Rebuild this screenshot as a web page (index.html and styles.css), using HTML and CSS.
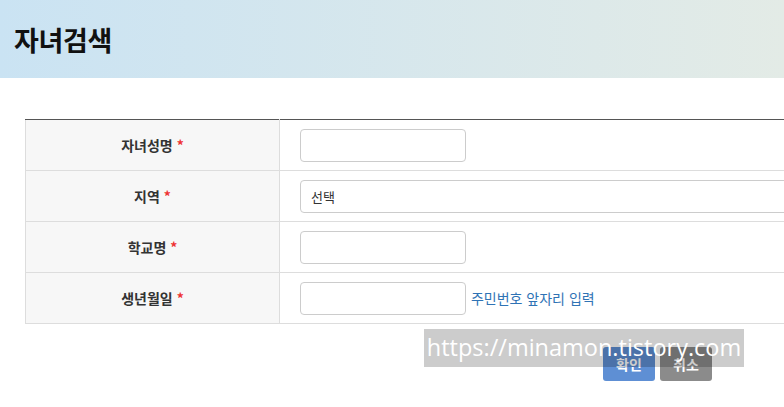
FILE: index.html
```html
<!DOCTYPE html>
<html lang="ko">
<head>
    <meta charset="UTF-8">
    <meta name="viewport" content="width=device-width, initial-scale=1.0">
    <title>자녀검색</title>
    <link rel="stylesheet" href="styles.css">
</head>
<body>
    <div class="header">
        <h1>자녀검색</h1>
    </div>

    <div class="content">
        <table class="form-table">
            <tr>
                <th>자녀성명 <span class="req">*</span></th>
                <td><input type="text" class="input"></td>
            </tr>
            <tr>
                <th>지역 <span class="req">*</span></th>
                <td><div class="select">선택</div></td>
            </tr>
            <tr>
                <th>학교명 <span class="req">*</span></th>
                <td><input type="text" class="input"></td>
            </tr>
            <tr>
                <th>생년월일 <span class="req">*</span></th>
                <td><input type="text" class="input"> <span class="help">주민번호 앞자리 입력</span></td>
            </tr>
        </table>

        <div class="buttons">
            <button class="btn btn-ok">확인</button>
            <button class="btn btn-cancel">취소</button>
        </div>
    </div>

    <div class="watermark">https://minamon.tistory.com</div>
</body>
</html>
```

FILE: styles.css
```css
html, body {
    margin: 0;
    padding: 0;
    overflow: hidden;
}
body {
    font-family: "Noto Sans CJK KR", "Noto Sans", sans-serif;
    color: #333;
    background-color: #fff;
    width: 784px;
    height: 407px;
    position: relative;
}
.header {
    height: 78px;
    background: linear-gradient(to right, #cae3f3, #e3ebe6);
    display: flex;
    align-items: center;
    padding-left: 14px;
}
.header h1 {
    margin: 0;
    font-size: 27px;
    font-weight: bold;
    color: #111;
    letter-spacing: -0.3px;
}
.content {
    padding: 41px 0 0 25px;
}
.form-table {
    border-collapse: collapse;
    width: 800px;
    table-layout: fixed;
}
.form-table th,
.form-table td {
    border: 1px solid #ddd;
    height: 50px;
    padding: 0;
}
.form-table tr:first-child th,
.form-table tr:first-child td {
    border-top-color: #555;
}
.form-table th {
    width: 253px;
    background-color: #f7f7f7;
    font-size: 14px;
    font-weight: bold;
    color: #333;
    text-align: center;
}
.form-table td {
    padding-left: 20px;
    font-size: 14px;
}
.req {
    color: #ee3333;
}
.input {
    width: 166px;
    height: 33px;
    box-sizing: border-box;
    border: 1px solid #ccc;
    border-radius: 4px;
    vertical-align: middle;
    margin: 0;
}
.select {
    width: 520px;
    height: 33px;
    box-sizing: border-box;
    border: 1px solid #ccc;
    border-radius: 4px;
    padding-left: 10px;
    line-height: 31px;
    font-size: 13px;
    color: #333;
}
.help {
    color: #2f73b5;
    font-size: 14px;
    vertical-align: middle;
    margin-left: 1px;
}
.buttons {
    display: flex;
    gap: 5px;
    padding-left: 578px;
    margin-top: 23px;
}
.btn {
    width: 52px;
    height: 34px;
    border: none;
    border-radius: 3px;
    color: #fff;
    font-family: "Noto Sans CJK KR", sans-serif;
    font-size: 14px;
    font-weight: bold;
    padding: 0;
}
.btn-ok {
    background-color: #5e8fd4;
}
.btn-cancel {
    background-color: #8b8b8b;
}
.watermark {
    position: absolute;
    left: 424px;
    top: 329px;
    width: 320px;
    height: 38px;
    background-color: rgba(0, 0, 0, 0.2);
    color: #fff;
    font-family: "Open Sans", sans-serif;
    font-size: 23.5px;
    line-height: 36px;
    text-align: center;
    white-space: nowrap;
}
```
